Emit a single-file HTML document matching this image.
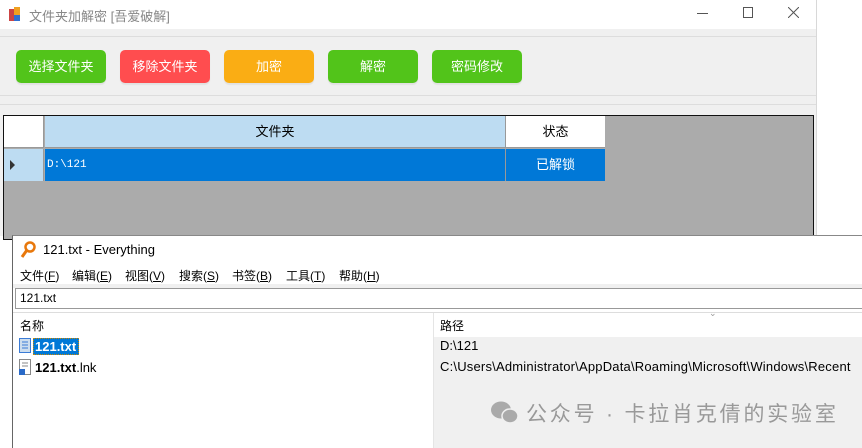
<!DOCTYPE html>
<html><head><meta charset="utf-8"><style>
*{margin:0;padding:0;box-sizing:border-box}
body{width:862px;height:448px;overflow:hidden;background:#fff;position:relative;font-family:"Liberation Sans","Noto Sans CJK SC",sans-serif;font-size:12px}
.abs{position:absolute}
.btn{position:absolute;top:50px;width:90px;height:33px;border-radius:5px;color:#fff;font-size:13px;text-align:center;line-height:33px;box-shadow:0 2px 1px rgba(0,0,0,.06)}
.m{position:absolute;top:267px;font-size:12px}
</style></head><body>
<div class="abs" style="left:0;top:0;width:817px;height:236px;background:#f0f0f0;border-right:1px solid #d8d8d8"></div>
<div class="abs" style="left:0;top:0;width:816px;height:29px;background:#fff"></div>
<svg class="abs" style="left:8px;top:7px" width="14" height="16"><rect x="1" y="2" width="6" height="12" fill="#c44"/><rect x="6" y="0" width="6" height="8" fill="#f0a020"/><rect x="6" y="8" width="6" height="6" fill="#3070d0"/></svg>
<div class="abs" style="left:29px;top:6px;font-size:13px;color:#888">文件夹加解密 [吾爱破解]</div>
<div class="abs" style="left:697px;top:13px;width:11px;height:1px;background:#555"></div>
<div class="abs" style="left:743px;top:7px;width:10px;height:11px;border:1px solid #555"></div>
<svg class="abs" style="left:788px;top:7px" width="11" height="11"><path d="M0 0L11 11M11 0L0 11" stroke="#555" stroke-width="1"/></svg>
<div class="abs" style="left:0;top:36px;width:816px;height:60px;border-top:1px solid #ddd;border-bottom:1px solid #ddd"></div>
<div class="btn" style="left:16px;background:#52c41a">选择文件夹</div>
<div class="btn" style="left:120px;background:#ff4d4f">移除文件夹</div>
<div class="btn" style="left:224px;background:#faad14">加密</div>
<div class="btn" style="left:328px;background:#52c41a">解密</div>
<div class="btn" style="left:432px;background:#52c41a">密码修改</div>
<div class="abs" style="left:0;top:104px;width:816px;height:1px;background:#ddd"></div>
<div class="abs" style="left:3px;top:115px;width:811px;height:125px;background:#ababab;border:1px solid #111"></div>
<div class="abs" style="left:4px;top:116px;width:40px;height:32px;background:#fff;border-right:1px solid #999;border-bottom:1px solid #999"></div>
<div class="abs" style="left:45px;top:116px;width:460px;height:32px;background:#bddcf2;border-bottom:1px solid #999;text-align:center;line-height:32px;font-size:13px">文件夹</div>
<div class="abs" style="left:505px;top:116px;width:100px;height:32px;background:#fff;border-left:1px solid #999;border-bottom:1px solid #999;text-align:center;line-height:32px;font-size:13px">状态</div>
<div class="abs" style="left:4px;top:149px;width:40px;height:32px;background:#bddcf2;border-right:1px solid #999"></div>
<div class="abs" style="left:10px;top:160px;width:0;height:0;border-left:5px solid #333;border-top:5px solid transparent;border-bottom:5px solid transparent"></div>
<div class="abs" style="left:45px;top:149px;width:460px;height:32px;background:#0078d7;color:#fff;line-height:32px;padding-left:2px;font-family:'Liberation Mono',monospace;font-size:11px">D:\121</div>
<div class="abs" style="left:505px;top:149px;width:100px;height:32px;background:#0078d7;border-left:1px solid #999;color:#fff;text-align:center;line-height:32px;font-size:13px">已解锁</div>
<div class="abs" style="left:12px;top:235px;width:850px;height:213px;background:#fff;border-left:1px solid #666;border-top:1px solid #888"></div>
<svg class="abs" style="left:20px;top:241px" width="16" height="18"><circle cx="10" cy="6" r="4.5" fill="none" stroke="#e8780c" stroke-width="2.5"/><line x1="7" y1="9" x2="2" y2="16" stroke="#e8780c" stroke-width="3"/></svg>
<div class="abs" style="left:43px;top:242px;font-size:13px;color:#000">121.txt - Everything</div>
<div class="m" style="left:20px">文件(<u>F</u>)</div>
<div class="m" style="left:72px">编辑(<u>E</u>)</div>
<div class="m" style="left:125px">视图(<u>V</u>)</div>
<div class="m" style="left:179px">搜索(<u>S</u>)</div>
<div class="m" style="left:232px">书签(<u>B</u>)</div>
<div class="m" style="left:286px">工具(<u>T</u>)</div>
<div class="m" style="left:339px">帮助(<u>H</u>)</div>
<div class="abs" style="left:13px;top:284px;width:849px;height:4px;background:#f0f0f0"></div>
<div class="abs" style="left:15px;top:288px;width:847px;height:21px;border:1px solid #999;border-right:none;padding-left:4px;line-height:19px;font-size:12px">121.txt</div>
<div class="abs" style="left:13px;top:312px;width:849px;height:1px;background:#ddd"></div>
<div class="abs" style="left:20px;top:317px;font-size:12px">名称</div>
<div class="abs" style="left:433px;top:313px;width:1px;height:135px;background:#e5e5e5"></div>
<div class="abs" style="left:440px;top:317px;font-size:12px">路径</div>
<div class="abs" style="left:709px;top:308px;font-size:9px;color:#999">⌄</div>
<div class="abs" style="left:434px;top:337px;width:428px;height:111px;background:#f0f0f0"></div>
<svg class="abs" style="left:19px;top:338px" width="12" height="15"><rect x=".5" y=".5" width="11" height="14" fill="#cde" stroke="#3a7bd5"/><path d="M3 4h6M3 7h6M3 10h6" stroke="#3a7bd5"/></svg>
<div class="abs" style="left:33px;top:338px;width:46px;height:17px;background:#0078d7;border:1px dotted #c80;color:#fff;font-weight:bold;font-size:13px;line-height:15px;padding-left:1px">121.txt</div>
<svg class="abs" style="left:19px;top:359px" width="12" height="16"><rect x=".5" y=".5" width="11" height="15" fill="#fff" stroke="#888"/><path d="M3 4h6M3 7h6" stroke="#888"/><rect x="0" y="10" width="6" height="6" fill="#2a6ac8"/></svg>
<div class="abs" style="left:35px;top:360px;font-size:13px"><b>121.txt</b>.lnk</div>
<div class="abs" style="left:440px;top:338px;font-size:13px">D:\121</div>
<div class="abs" style="left:440px;top:359px;font-size:13px;letter-spacing:0.2px">C:\Users\Administrator\AppData\Roaming\Microsoft\Windows\Recent</div>
<svg class="abs" style="left:490px;top:400px" width="30" height="26"><ellipse cx="11" cy="10" rx="10" ry="8.5" fill="#aaa"/><ellipse cx="20" cy="16" rx="8" ry="7" fill="#aaa" stroke="#f0f0f0" stroke-width="1.5"/></svg>
<div class="abs" style="left:526px;top:398px;font-size:21px;color:#999;letter-spacing:2.8px">公众号 · 卡拉肖克倩的实验室</div>
</body></html>
